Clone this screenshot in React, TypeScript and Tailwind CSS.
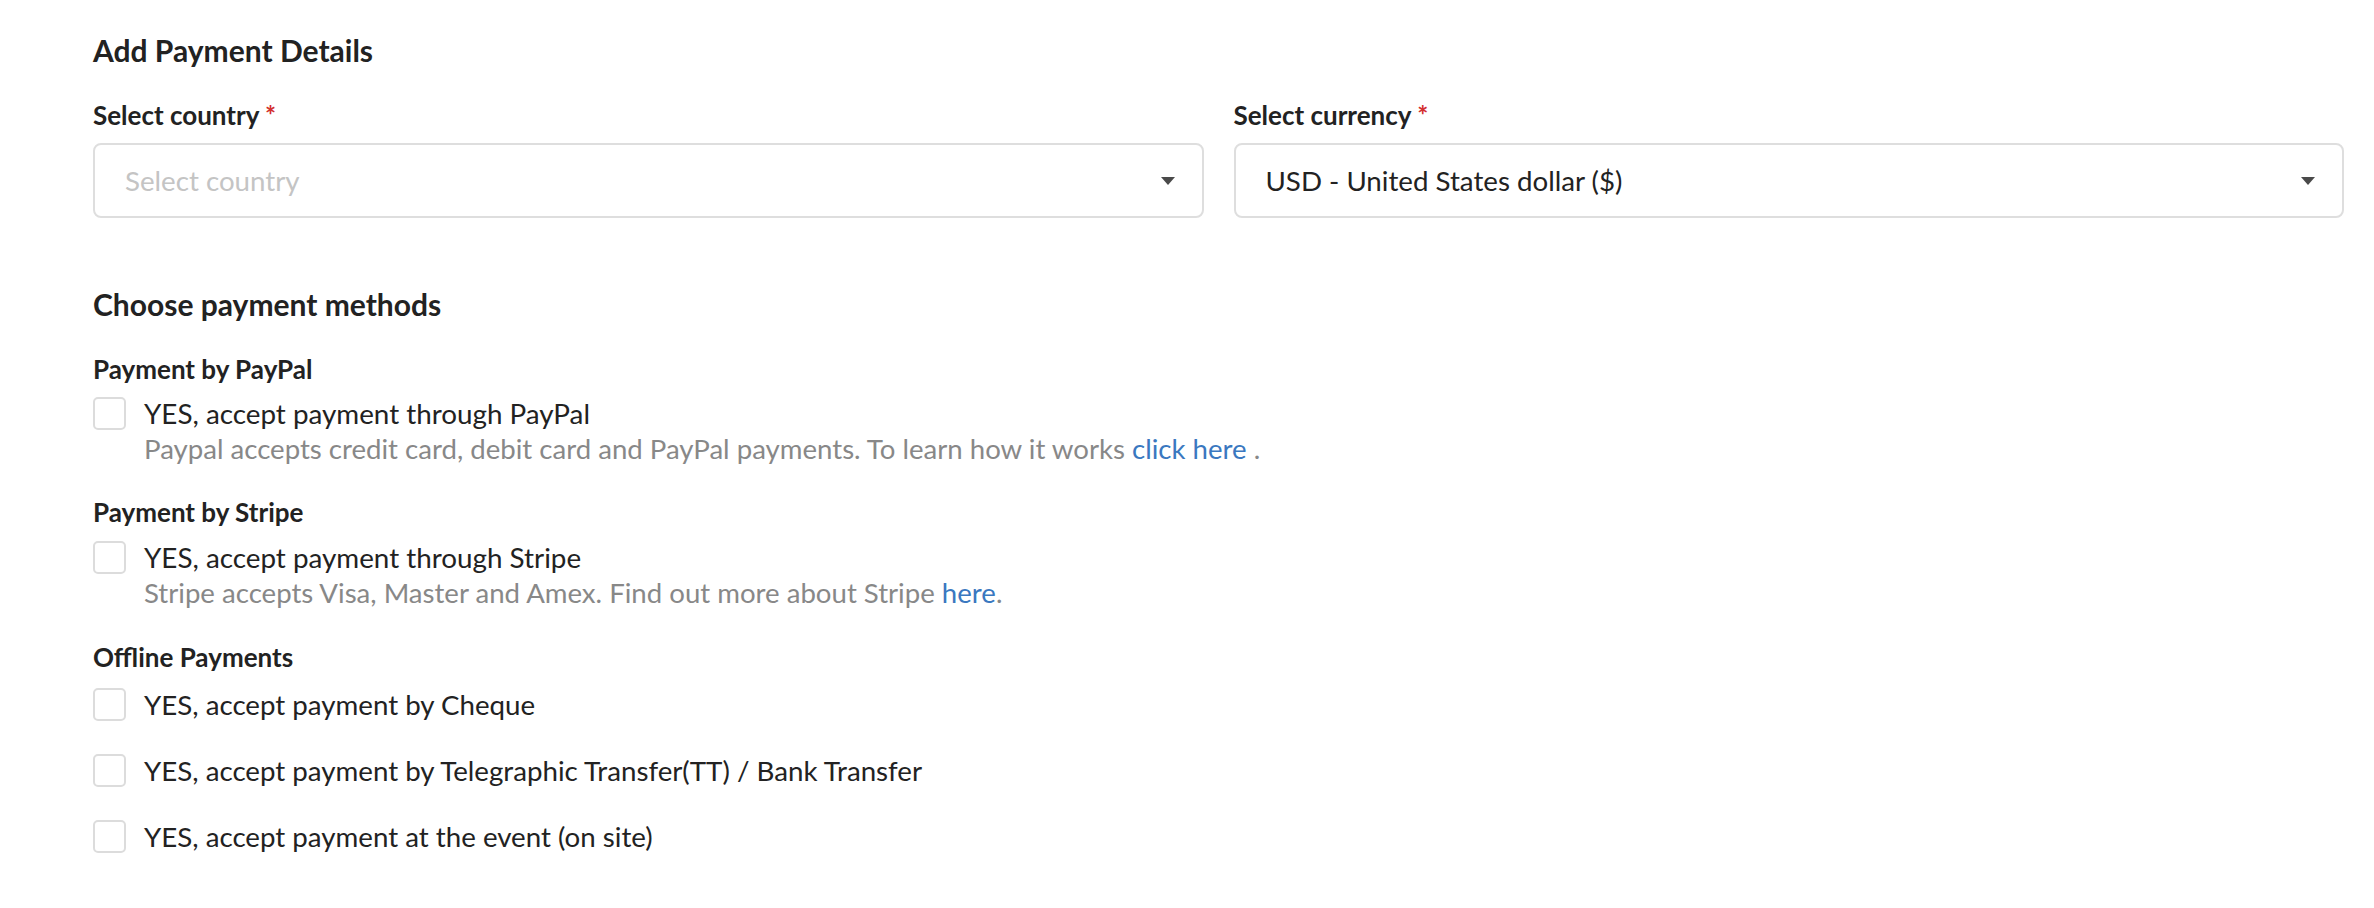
import React from "react";

function Caret() {
  return (
    <svg width="14" height="8" viewBox="0 0 14 8" className="shrink-0">
      <path d="M0 0 L14 0 L7 8 Z" fill="#4a4a4a" />
    </svg>
  );
}

function Check({ children }: { children: React.ReactNode }) {
  return (
    <div className="flex items-start">
      <div className="h-[33px] w-[33px] shrink-0 rounded-[5px] border-2 border-[#dcdcdc] bg-white" />
      <div className="ml-[18px]">{children}</div>
    </div>
  );
}

export default function App() {
  return (
    <div
      className="min-h-[908px] w-full bg-white pl-[93px] pr-[30px] pt-[30px] text-[#222222]"
      style={{ fontFamily: "Lato, 'Open Sans', sans-serif" }}
    >
      <h1 className="text-[30px] font-bold leading-[40px]">Add Payment Details</h1>

      <div className="mt-[29px] grid grid-cols-2 gap-[30px]">
        <div>
          <div className="text-[26px] font-bold leading-[32px]">
            Select country <span className="text-[#d32f2f]">*</span>
          </div>
          <div className="mt-[12px] flex h-[75px] items-center justify-between rounded-[8px] border-2 border-[#dedede] pl-[30px] pr-[27px]">
            <span className="text-[27.7px] text-[#c4c4c4]">Select country</span>
            <Caret />
          </div>
        </div>
        <div>
          <div className="text-[26px] font-bold leading-[32px]">
            Select currency <span className="text-[#d32f2f]">*</span>
          </div>
          <div className="mt-[12px] flex h-[75px] items-center justify-between rounded-[8px] border-2 border-[#dedede] pl-[30px] pr-[27px]">
            <span className="text-[27.7px] text-[#222222]">USD - United States dollar ($)</span>
            <Caret />
          </div>
        </div>
      </div>

      <h2 className="mt-[66px] text-[30px] font-bold leading-[40px]">Choose payment methods</h2>

      <div className="mt-[29px] text-[26px] font-bold leading-[32px]">Payment by PayPal</div>
      <div className="mt-[12px]">
        <Check>
          <div className="text-[27.8px] leading-[34px]">YES, accept payment through PayPal</div>
          <div className="text-[27.6px] leading-[36px] text-[#888888]">
            Paypal accepts credit card, debit card and PayPal payments. To learn how it works{" "}
            <span className="text-[#3a78c0]">click here</span> .
          </div>
        </Check>
      </div>

      <div className="mt-[29px] text-[26px] font-bold leading-[32px]">Payment by Stripe</div>
      <div className="mt-[13px]">
        <Check>
          <div className="text-[27.8px] leading-[34px]">YES, accept payment through Stripe</div>
          <div className="text-[27.6px] leading-[36px] text-[#888888]">
            Stripe accepts Visa, Master and Amex. Find out more about Stripe{" "}
            <span className="text-[#3a78c0]">here</span>.
          </div>
        </Check>
      </div>

      <div className="mt-[30px] text-[26px] font-bold leading-[32px]">Offline Payments</div>
      <div className="mt-[15px] flex flex-col gap-[32px]">
        <Check>
          <div className="text-[27.7px] leading-[34px]">YES, accept payment by Cheque</div>
        </Check>
        <Check>
          <div className="text-[27.7px] leading-[34px]">
            YES, accept payment by Telegraphic Transfer(TT) / Bank Transfer
          </div>
        </Check>
        <Check>
          <div className="text-[27.7px] leading-[34px]">YES, accept payment at the event (on site)</div>
        </Check>
      </div>
    </div>
  );
}
